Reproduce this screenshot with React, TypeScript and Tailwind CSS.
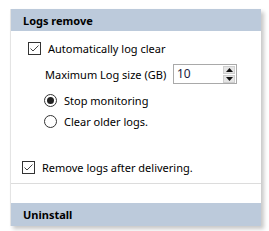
export default function App() {
  return (
    <div className="w-[269px] h-[231px] bg-white pt-[9px] pl-[10px] text-[11px] text-black" style={{ fontFamily: '"Noto Sans", "Open Sans", sans-serif' }}>
      <div className="w-[251px] h-[217px] bg-white flex flex-col shadow-[3px_3px_4px_rgba(0,0,0,0.22)] border-l border-[#e4e4e4]">
        {/* Logs remove header */}
        <div className="h-[22px] bg-[#bccadb] flex items-center pl-[12px] font-bold leading-none">Logs remove</div>

        <div className="flex flex-col pt-[11px] pl-[17px]">
          <div className="flex items-center gap-[7px] h-[13px]">
            <Checkbox />
            <span className="leading-none">Automatically log clear</span>
          </div>

          <div className="flex items-center h-[20px] mt-[9px] pl-[17px]">
            <span className="w-[128px] leading-none whitespace-nowrap">Maximum Log size (GB)</span>
            <div className="w-[64px] h-[20px] border border-[#a9a9a9] bg-white flex items-center justify-between pl-[3px] pr-[1px]">
              <span className="leading-none text-[#1a1a40] text-[12px]">10</span>
              <div className="flex flex-col gap-[1px]">
                <SpinBtn up />
                <SpinBtn />
              </div>
            </div>
          </div>

          <div className="flex items-center gap-[7px] h-[13px] mt-[10px] pl-[16px]">
            <Radio checked />
            <span className="leading-none">Stop monitoring</span>
          </div>
          <div className="flex items-center gap-[7px] h-[13px] mt-[8px] pl-[16px]">
            <Radio />
            <span className="leading-none">Clear older logs.</span>
          </div>

          <div className="flex items-center gap-[7px] h-[13px] mt-[33px] -ml-[6px]">
            <Checkbox />
            <span className="leading-none">Remove logs after delivering.</span>
          </div>
        </div>

        <div className="mt-[9px] border-t border-[#dcdcdc]" />
        <div className="flex-1" />

        {/* Uninstall header */}
        <div className="h-[23px] bg-[#bccadb] flex items-center pl-[12px] font-bold leading-none">Uninstall</div>
      </div>
    </div>
  );
}

function Checkbox() {
  return (
    <div className="w-[13px] h-[13px] border border-[#333] bg-white flex items-center justify-center shrink-0">
      <svg width="11" height="11" viewBox="0 0 11 11" fill="none" stroke="#444" strokeWidth="1">
        <polyline points="1.5,5.5 4,8 9.5,2.5" />
      </svg>
    </div>
  );
}

function Radio({ checked }: { checked?: boolean }) {
  return (
    <div className="w-[13px] h-[13px] rounded-full border border-[#333] bg-white flex items-center justify-center shrink-0">
      {checked && <div className="w-[7px] h-[7px] rounded-full bg-[#222]" />}
    </div>
  );
}

function SpinBtn({ up }: { up?: boolean }) {
  return (
    <div className="w-[12px] h-[8px] bg-[#e5e5e5] border border-[#cfcfcf] flex items-center justify-center">
      <svg width="7" height="4" viewBox="0 0 7 4" fill="#111">
        {up ? <polygon points="0,4 7,4 3.5,0" /> : <polygon points="0,0 7,0 3.5,4" />}
      </svg>
    </div>
  );
}
